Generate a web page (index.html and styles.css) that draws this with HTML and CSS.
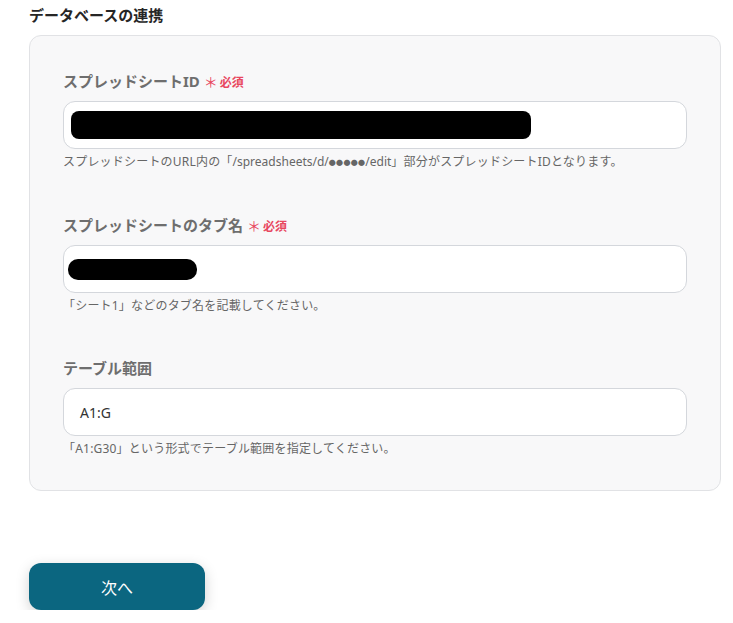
FILE: index.html
```html
<!DOCTYPE html>
<html lang="ja">
<head>
<meta charset="utf-8">
<link rel="stylesheet" href="styles.css">
</head>
<body>
<div class="page">
  <h2 class="title">データベースの連携</h2>
  <section class="card">
    <div class="field">
      <div class="label">スプレッドシートID<span class="req"><span class="ast">＊</span>必須</span></div>
      <div class="input"><span class="redact redact-id"></span></div>
      <p class="help">スプレッドシートのURL内の「<span class="latin">/spreadsheets/d/<span class="dots">●●●●●</span>/edit</span>」部分がスプレッドシートIDとなります。</p>
    </div>
    <div class="field">
      <div class="label">スプレッドシートのタブ名<span class="req"><span class="ast">＊</span>必須</span></div>
      <div class="input input-tab"><span class="redact redact-tab"></span></div>
      <p class="help">「シート1」などのタブ名を記載してください。</p>
    </div>
    <div class="field">
      <div class="label">テーブル範囲</div>
      <div class="input input-text">A1:G</div>
      <p class="help">「A1:G30」という形式でテーブル範囲を指定してください。</p>
    </div>
  </section>
  <button class="next">次へ</button>
</div>
</body>
</html>
```

FILE: styles.css
```css
* { box-sizing: border-box; }
body {
  margin: 0;
  background: #ffffff;
  font-family: "Noto Sans", "Noto Sans CJK JP", sans-serif;
}
.page {
  padding: 5px 12px 0 29px;
  display: flex;
  flex-direction: column;
  align-items: flex-start;
}
.title {
  margin: 0 0 10px;
  font-size: 15px;
  line-height: 20px;
  font-weight: 700;
  color: #262626;
}
.card {
  width: 692px;
  background: #f8f8f9;
  border: 1px solid #e1e2e5;
  border-radius: 12px;
  padding: 35px 33px 32px 33px;
  display: flex;
  flex-direction: column;
  gap: 43px;
}
.field {
  display: flex;
  flex-direction: column;
}
.label {
  height: 20px;
  font-size: 15px;
  line-height: 20px;
  font-weight: 700;
  color: #6e6e6e;
  margin-bottom: 10px;
  display: flex;
  align-items: baseline;
}
.req {
  font-size: 12px;
  line-height: 20px;
  color: #e8475f;
  margin-left: 4px;
  font-weight: 700;
}
.ast {
  font-size: 14px;
  line-height: 20px;
  font-weight: 400;
  margin-right: 2px;
}
.input {
  height: 48px;
  background: #ffffff;
  border: 1px solid #d4d7dc;
  border-radius: 12px;
  display: flex;
  align-items: center;
  padding-left: 7px;
}
.input-tab { padding-left: 4px; }
.input-text {
  padding-left: 16px;
  font-size: 14px;
  color: #333;
}
.redact {
  display: block;
  background: #000;
}
.redact-id {
  width: 460px;
  height: 28px;
  border-radius: 8px;
}
.redact-tab {
  width: 129px;
  height: 21px;
  border-radius: 10px;
}
.help {
  margin: 4px 0 0;
  font-size: 12px;
  line-height: 18px;
  letter-spacing: 0.2px;
  color: #666;
}
.latin {
  letter-spacing: 0;
}
.dots {
  font-size: 7px;
  letter-spacing: 0.3px;
  vertical-align: 1px;
}
.next {
  margin-top: 72px;
  width: 176px;
  height: 47px;
  border: none;
  border-radius: 12px;
  background: #0b6680;
  color: #fff;
  font-family: "Noto Sans CJK JP", sans-serif;
  font-size: 16px;
  box-shadow: 0 4px 14px rgba(0, 0, 0, 0.18);
}
```
